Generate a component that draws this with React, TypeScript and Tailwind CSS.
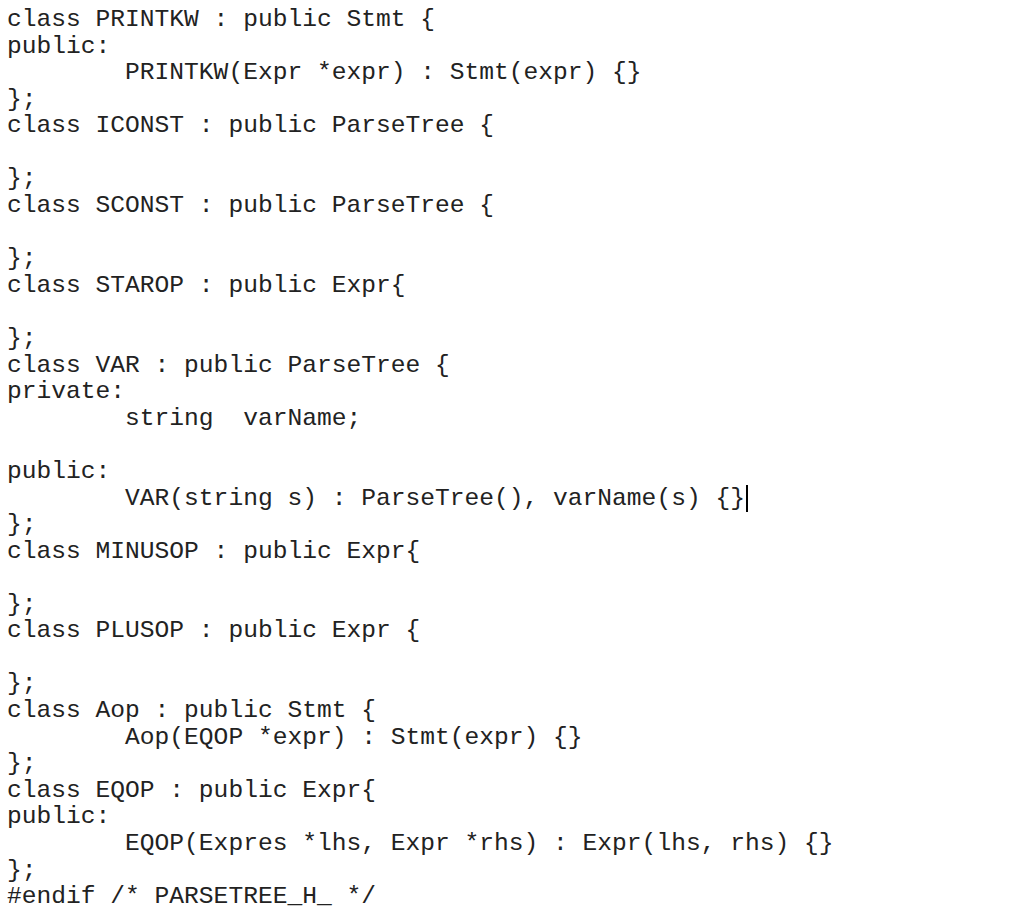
import React from "react";

const lines: string[] = [
  "class PRINTKW : public Stmt {",
  "public:",
  "        PRINTKW(Expr *expr) : Stmt(expr) {}",
  "};",
  "class ICONST : public ParseTree {",
  "",
  "};",
  "class SCONST : public ParseTree {",
  "",
  "};",
  "class STAROP : public Expr{",
  "",
  "};",
  "class VAR : public ParseTree {",
  "private:",
  "        string  varName;",
  "",
  "public:",
  "CURSOR",
  "};",
  "class MINUSOP : public Expr{",
  "",
  "};",
  "class PLUSOP : public Expr {",
  "",
  "};",
  "class Aop : public Stmt {",
  "        Aop(EQOP *expr) : Stmt(expr) {}",
  "};",
  "class EQOP : public Expr{",
  "public:",
  "        EQOP(Expres *lhs, Expr *rhs) : Expr(lhs, rhs) {}",
  "};",
  "#endif /* PARSETREE_H_ */",
];

export default function App() {
  return (
    <div className="w-[1024px] h-[920px] bg-white overflow-hidden">
      <div
        className="pt-[7px] pl-[7px] text-[24.6px] leading-[26.58px] text-[#222222] whitespace-pre"
        style={{ fontFamily: '"Courier New", Courier, "Nimbus Mono PS", "FreeMono", "Liberation Mono", monospace' }}
      >
        {lines.map((l, i) =>
          l === "CURSOR" ? (
            <div key={i} className="h-[26.58px]">
              {"        VAR(string s) : ParseTree(), varName(s) {}"}
              <span className="inline-block w-[2px] h-[27px] bg-black align-[-7px] ml-[1px]" />
            </div>
          ) : (
            <div key={i} className="h-[26.58px]">
              {l}
            </div>
          )
        )}
      </div>
    </div>
  );
}
